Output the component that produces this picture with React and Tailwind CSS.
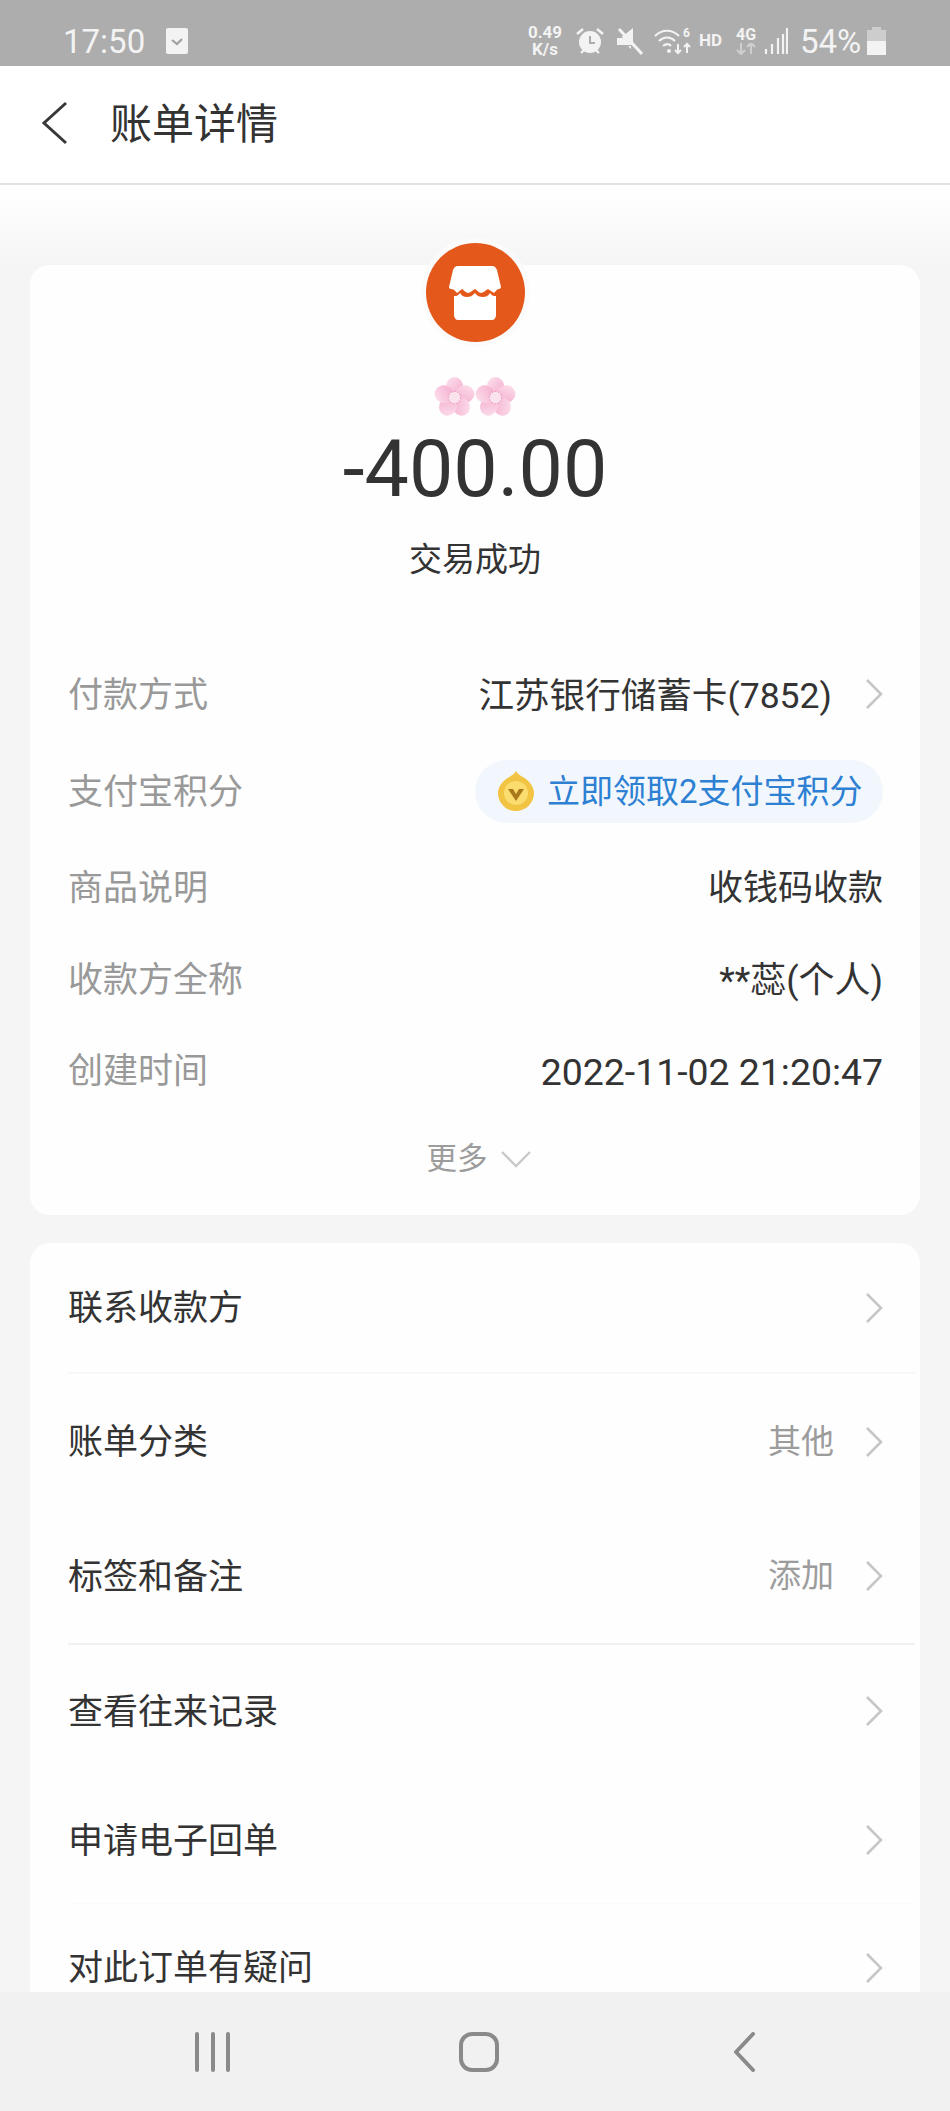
import React from 'react';

// 右箭头
const Chevron = () => (
  <svg width="18" height="32" viewBox="0 0 18 32" fill="none" className="shrink-0">
    <path d="M2 2l14 14L2 30" stroke="#c6c6c6" strokeWidth="2.6" />
  </svg>
);

const Flower = () => (
  <svg width="41" height="39" viewBox="0 0 40 38">
    <defs>
      <linearGradient id="petal" x1="0" y1="0" x2="1" y2="1">
        <stop offset="0" stopColor="#fce3ee" />
        <stop offset="1" stopColor="#f4a9cc" />
      </linearGradient>
    </defs>
    {[0, 72, 144, 216, 288].map((a) => (
      <ellipse key={a} cx="20" cy="9.5" rx="8.5" ry="9.500" fill="url(#petal)" transform={`rotate(${a} 20 20)`} />
    ))}
    <circle cx="20" cy="20" r="6" fill="#fbe3ee" stroke="#e59bbf" strokeWidth="1" strokeDasharray="1.5 1.5" />
  </svg>
);

const StatusBar = () => (
  <div className="h-[66px] shrink-0 bg-[#adadad] flex items-center pl-[63px] pt-[15px] text-[#f3f3f3]">
    <span className="text-[33px] leading-none w-[103px] pt-[2px]">17:50</span>
    <svg width="22" height="26" viewBox="0 0 22 26">
      <rect width="22" height="26" rx="2" fill="#f3f3f3" />
      <path d="M6 12l5 4 5-5" fill="none" stroke="#a0a0a0" strokeWidth="2.2" />
    </svg>
    <div className="ml-[336px] w-[42px] flex flex-col items-center font-bold text-[17px] leading-[17px]">
      <span>0.49</span>
      <span>K/s</span>
    </div>
    {/* 闹钟 */}
    <svg width="30" height="30" viewBox="0 0 30 30" className="ml-[9px]">
      <circle cx="15" cy="16" r="11" fill="#f3f3f3" />
      <path d="M15 10v7h5" fill="none" stroke="#adadad" strokeWidth="2" />
      <path d="M2 8l6-5M28 8l-6-5M6 27l3-3M24 27l-3-3" stroke="#f3f3f3" strokeWidth="2.4" />
    </svg>
    {/* 静音 */}
    <svg width="26" height="28" viewBox="0 0 26 28" className="ml-[12px]">
      <path d="M0 9h6l10-8v18L4 9" fill="#f3f3f3" />
      <path d="M0 11h7l8 7H0zM14 19v3l-3-3z" fill="#f3f3f3" />
      <path d="M2 2l23 25" stroke="#f3f3f3" strokeWidth="3" />
    </svg>
    {/* wifi */}
    <svg width="37" height="28" viewBox="0 0 37 28" className="ml-[11px]">
      <path d="M1 9c7-7 17-7 24 0M5 14c5-4.500 11-4.500 16 0M9 19c3-2.500 6-2.500 8 0" fill="none" stroke="#f3f3f3" strokeWidth="2.2" />
      <circle cx="15" cy="24" r="2" fill="#f3f3f3" />
      <path d="M24 17v9M21 23l3 3 3-3M33 26v-9M30 20l3-3 3 3" fill="none" stroke="#f3f3f3" strokeWidth="2" />
      <text x="29" y="10" fontSize="12" fontWeight="700" fill="#f3f3f3">6</text>
    </svg>
    <span className="ml-[8px] w-[24px] font-bold text-[17px] leading-none">HD</span>
    <div className="ml-[12px] w-[22px] flex flex-col items-center">
      <span className="font-bold text-[16px] leading-[16px]">4G</span>
      <svg width="20" height="12" viewBox="0 0 20 12">
        <path d="M5 0v11M1 7l4 4 4-4M15 11V0M11 4l4-4 4 4" fill="none" stroke="#cfcfcf" strokeWidth="2" />
      </svg>
    </div>
    <svg width="24" height="26" viewBox="0 0 24 26" className="ml-[7px]">
      <path d="M2 21v5M8 16v10M14 10v16M19 6v20M23 0v26" stroke="#f3f3f3" strokeWidth="2.2" />
    </svg>
    <span className="ml-[12px] text-[33px] leading-none pt-[2px]">54%</span>
    <svg width="19" height="28" viewBox="0 0 19 28" className="ml-[6px]">
      <rect x="5" y="0" width="9" height="3" fill="#cdcdcd" />
      <rect x="0" y="3" width="19" height="11" fill="#cdcdcd" />
      <rect x="0" y="14" width="19" height="14" fill="#f3f3f3" />
    </svg>
  </div>
);

const FILAS_DETALLE = [
  { etiqueta: '商品说明', valor: '收钱码收款', alto: 'h-[96px]', tam: 'text-[35px]' },
  { etiqueta: '收款方全称', valor: '**蕊(个人)', alto: 'h-[88px]', tam: 'text-[36px]' },
  { etiqueta: '创建时间', valor: '2022-11-02 21:20:47', alto: 'h-[94px]', tam: 'text-[37.4px]' },
];

const FILAS_MENU = [
  { texto: '联系收款方', alto: 'h-[131px]', linea: 'border-b-2 border-[#f8f8f8]' },
  { texto: '账单分类', extra: '其他', alto: 'h-[135px]' },
  { texto: '标签和备注', extra: '添加', alto: 'h-[136px]', linea: 'border-b-2 border-[#f1f1f1]' },
  { texto: '查看往来记录', alto: 'h-[132px]' },
  { texto: '申请电子回单', alto: 'h-[127px]', linea: 'border-b border-[#fafafa]' },
  { texto: '对此订单有疑问', alto: 'h-[127px]' },
];

const App = () => {
  return (
    <div
      className="w-[950px] h-[2111px] flex flex-col bg-[#f5f5f5] overflow-hidden text-[#333333]"
      style={{ fontFamily: 'Roboto, "Noto Sans CJK SC", sans-serif' }}
    >
      <StatusBar />

      {/* Header */}
      <div className="h-[119px] shrink-0 bg-white border-b-2 border-[#e2e2e2] flex items-center pl-[41px] pb-[3px]">
        <svg width="27" height="44" viewBox="0 0 27 44" fill="none">
          <path d="M25 2L3 22l22 20" stroke="#383838" strokeWidth="3" />
        </svg>
        <span className="ml-[42px] text-[42px] leading-none pt-[4px]">账单详情</span>
      </div>

      {/* Contenido */}
      <div className="flex-1 min-h-0 overflow-hidden px-[30px] pt-[80px] bg-gradient-to-b from-[#ffffff] to-[#f5f5f5] bg-[length:100%_80px] bg-no-repeat">
        {/* Tarjeta principal */}
        <div className="h-[950px] bg-[#fefefe] rounded-[20px] flex flex-col items-center">
          <div className="-mt-[27px] w-[109px] h-[109px] rounded-full bg-[#fbfbfb] flex items-center justify-center shrink-0">
            <div className="w-[99px] h-[99px] rounded-full bg-[#e4581c] flex items-center justify-center">
              <svg width="52" height="54" viewBox="0 0 52 54" fill="#ffffff">
                <path d="M9 0h34c3 0 4 2 5 4l4 17c0 1-1 2-2 2-2 0-3 2-5 4-2-1-4-3-6-4-2 1-5 4-7 4-2 0-4-3-6-4-2 1-5 4-7 4-2 0-4-3-6-4-2 1-3 3-5 4-2-2-3-4-6-4-1 0-2-1-2-2L4 4C5 2 6 0 9 0z" />
                <path d="M5 30c2 0 4 0 6-3 2 3 4 4 7 4s5-1 8-4c2 3 5 4 8 4s5-1 7-4c2 3 4 3 6 3v19c0 3-2 5-4 5H9c-2 0-4-2-4-5z" />
              </svg>
            </div>
          </div>
          <div className="mt-[30px] flex">
            <Flower />
            <Flower />
          </div>
          <div className="mt-[9px] h-[88px] text-[79px] leading-[88px] text-[#333333]">-400.00</div>
          <div className="mt-[22px] h-[50px] text-[33px] leading-[50px]">交易成功</div>

          <div className="w-full mt-[61px] pl-[38px] pr-[37px]">
            <div className="h-[97px] flex items-center justify-between">
              <span className="text-[35px] pt-[4px] text-[#999999]">付款方式</span>
              <div className="flex items-center gap-[33px]">
                <span className="text-[35.6px] pt-[4px]">江苏银行储蓄卡(7852)</span>
                <Chevron />
              </div>
            </div>
            <div className="h-[96px] flex items-center justify-between">
              <span className="text-[35px] pt-[4px] text-[#999999]">支付宝积分</span>
              <div className="h-[63px] w-[408px] rounded-full bg-[#f2f7fd] flex items-center pl-[23px]">
                <svg width="36" height="40" viewBox="0 0 36 40">
                  <path d="M18 0c2 4 6 5 10 8 5 4 8 9 8 14 0 10-8 18-18 18S0 32 0 22c0-5 3-10 8-14 4-3 8-4 10-8z" fill="#f2c443" />
                  <circle cx="18" cy="22" r="12" fill="#fbdc6e" />
                  <path d="M10 18h5l3 5 3-5h5l-8 12z" fill="#a9781a" />
                </svg>
                <span className="ml-[13px] text-[33px] leading-none text-[#2d80d2] whitespace-nowrap">立即领取2支付宝积分</span>
              </div>
            </div>
            {FILAS_DETALLE.map((fila) => (
              <div key={fila.etiqueta} className={`${fila.alto} flex items-center justify-between`}>
                <span className="text-[35px] pt-[4px] text-[#999999]">{fila.etiqueta}</span>
                <span className={`${fila.tam} pt-[4px]`}>{fila.valor}</span>
              </div>
            ))}
          </div>
          <div className="mt-[22px] ml-[8px] flex items-center gap-[12px] text-[#9c9c9c]">
            <span className="text-[30.5px] leading-[40px]">更多</span>
            <svg width="32" height="18" viewBox="0 0 32 18" fill="none">
              <path d="M2 2l14 14L30 2" stroke="#c9c9c9" strokeWidth="2.4" />
            </svg>
          </div>
        </div>

        {/* Tarjeta de acciones */}
        <div className="mt-[28px] bg-[#fefefe] rounded-t-[20px] pl-[38px] pr-[5px]">
          {FILAS_MENU.map((fila) => (
            <div
              key={fila.texto}
              className={`${fila.alto} flex items-center justify-between pr-[32px] ${fila.linea || ''}`}
            >
              <span className="text-[35px] pt-[4px]">{fila.texto}</span>
              <div className="flex items-center gap-[31px]">
                {fila.extra && <span className="text-[33px] text-[#9c9c9c]">{fila.extra}</span>}
                <Chevron />
              </div>
            </div>
          ))}
        </div>
      </div>

      {/* Navegación Android */}
      <div className="h-[119px] shrink-0 bg-[#f1f1f1] flex items-center pl-[195px]">
        <svg width="36" height="40" viewBox="0 0 36 40" fill="none">
          <path d="M2 2v36M18 2v36M33 2v36" stroke="#8a8a8a" strokeWidth="4" strokeLinecap="round" />
        </svg>
        <svg width="40" height="40" viewBox="0 0 40 40" fill="none" className="ml-[228px]">
          <rect x="2" y="2" width="36" height="36" rx="11" stroke="#8a8a8a" strokeWidth="4" />
        </svg>
        <svg width="24" height="40" viewBox="0 0 24 40" fill="none" className="ml-[233px]">
          <path d="M21 2L4 20l17 18" stroke="#8a8a8a" strokeWidth="4" strokeLinecap="round" strokeLinejoin="round" />
        </svg>
      </div>
    </div>
  );
};

export default App;
